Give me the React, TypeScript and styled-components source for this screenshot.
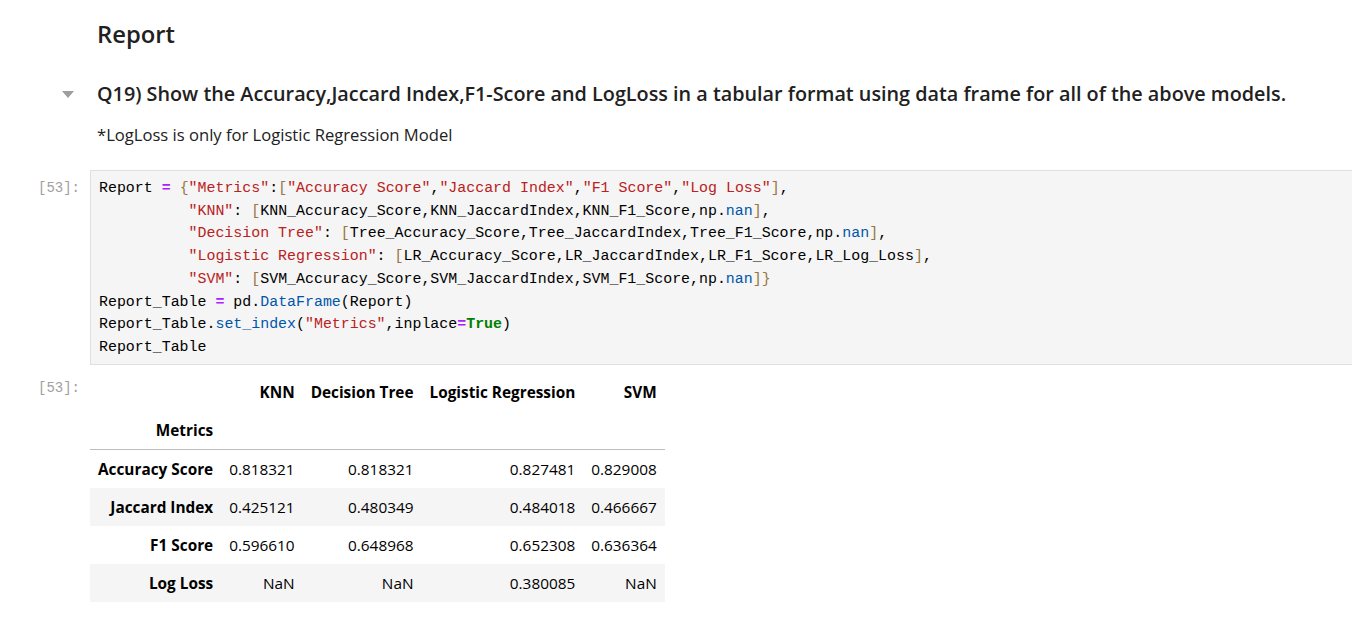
import styled, { createGlobalStyle } from "styled-components";

const GlobalStyle = createGlobalStyle`
  html, body {
    margin: 0;
    padding: 0;
    background: #ffffff;
    overflow: hidden;
  }
  body {
    font-family: "Open Sans", "Noto Sans", sans-serif;
    color: #212121;
  }
`;

const Notebook = styled.div`
  width: 1352px;
  height: 617px;
  padding-top: 14px;
  box-sizing: border-box;
`;

const Cell = styled.div<{ $top?: number }>`
  display: flex;
  align-items: flex-start;
  margin-top: ${(p) => p.$top ?? 0}px;
`;

const Gutter = styled.div<{ $pad?: number }>`
  width: 90px;
  flex-shrink: 0;
  display: flex;
  justify-content: flex-end;
  box-sizing: border-box;
  padding-right: 10px;
  padding-top: ${(p) => p.$pad ?? 0}px;
`;

const Collapser = styled.div`
  width: 90px;
  flex-shrink: 0;
  display: flex;
  justify-content: flex-start;
  padding-left: 62px;
  box-sizing: border-box;
  padding-top: 12px;
`;

const Prompt = styled.div`
  font-family: "Liberation Mono", "DejaVu Sans Mono", monospace;
  font-size: 14px;
  color: #a0a0a0;
  line-height: 22.7px;
`;

const Body = styled.div`
  flex: 1;
  min-width: 0;
`;

const H2 = styled.div`
  padding-left: 7px;
  font-size: 23.8px;
  font-weight: 600;
  line-height: 40px;
  color: #212121;
`;

const H3 = styled.div`
  padding-left: 7px;
  font-size: 19.8px;
  font-weight: 600;
  line-height: 30px;
  color: #212121;
`;

const Para = styled.div`
  padding-left: 7px;
  font-size: 16.6px;
  line-height: 24px;
  color: #212121;
  margin-top: 14px;
`;

const CodeBox = styled.div`
  background: #f5f5f5;
  border: 1px solid #e0e0e0;
  border-right: none;
  padding: 6px 8px 5px;
  font-family: "Liberation Mono", "DejaVu Sans Mono", monospace;
  font-size: 14.93px;
  line-height: 22.7px;
  white-space: pre;
  color: #000000;
`;

const Tok = styled.span<{ $k: "op" | "str" | "br" | "attr" | "kw" }>`
  color: ${(p) =>
    ({ op: "#aa22ff", str: "#ba2121", br: "#997744", attr: "#0055aa", kw: "#008000" })[p.$k]};
  font-weight: ${(p) => (p.$k === "op" || p.$k === "kw" ? 700 : 400)};
`;

const Table = styled.table`
  border-collapse: collapse;
  border-spacing: 0;
  font-size: 15.35px;
  color: #000000;
`;

const Th = styled.th`
  font-weight: 700;
  text-align: right;
  padding: 0 8px;
  height: 38px;
  white-space: nowrap;
`;

const Td = styled.td`
  text-align: right;
  padding: 0 8px;
  height: 38px;
  white-space: nowrap;
`;

const HeadRow = styled.tr<{ $line?: boolean }>`
  border-bottom: ${(p) => (p.$line ? "1px solid #bdbdbd" : "none")};
`;

const Row = styled.tr<{ $shade: boolean }>`
  background: ${(p) => (p.$shade ? "#f5f5f5" : "#ffffff")};
`;

const Triangle = () => (
  <svg width="12" height="8" viewBox="0 0 12 8">
    <path d="M0 0 L12 0 L6 7 Z" fill="#9e9e9e" />
  </svg>
);

const rows = [
  ["Accuracy Score", "0.818321", "0.818321", "0.827481", "0.829008"],
  ["Jaccard Index", "0.425121", "0.480349", "0.484018", "0.466667"],
  ["F1 Score", "0.596610", "0.648968", "0.652308", "0.636364"],
  ["Log Loss", "NaN", "NaN", "0.380085", "NaN"],
];

const S = (t: string) => <Tok $k="str">{t}</Tok>;
const B = (t: string) => <Tok $k="br">{t}</Tok>;
const A = (t: string) => <Tok $k="attr">{t}</Tok>;

export default function App() {
  return (
    <>
      <GlobalStyle />
      <Notebook>
        <Cell>
          <Gutter />
          <Body>
            <H2>Report</H2>
          </Body>
        </Cell>
        <Cell $top={25}>
          <Collapser>
            <Triangle />
          </Collapser>
          <Body>
            <H3>Q19) Show the Accuracy,Jaccard Index,F1-Score and LogLoss in a tabular format using data frame for all of the above models.</H3>
            <Para>*LogLoss is only for Logistic Regression Model</Para>
          </Body>
        </Cell>
        <Cell $top={23}>
          <Gutter $pad={7}>
            <Prompt>[53]:</Prompt>
          </Gutter>
          <Body>
            <CodeBox>
              Report <Tok $k="op">=</Tok> {B("{")}{S('"Metrics"')}:{B("[")}{S('"Accuracy Score"')},{S('"Jaccard Index"')},{S('"F1 Score"')},{S('"Log Loss"')}{B("]")},{"\n"}
              {"          "}{S('"KNN"')}: {B("[")}KNN_Accuracy_Score,KNN_JaccardIndex,KNN_F1_Score,np.{A("nan")}{B("]")},{"\n"}
              {"          "}{S('"Decision Tree"')}: {B("[")}Tree_Accuracy_Score,Tree_JaccardIndex,Tree_F1_Score,np.{A("nan")}{B("]")},{"\n"}
              {"          "}{S('"Logistic Regression"')}: {B("[")}LR_Accuracy_Score,LR_JaccardIndex,LR_F1_Score,LR_Log_Loss{B("]")},{"\n"}
              {"          "}{S('"SVM"')}: {B("[")}SVM_Accuracy_Score,SVM_JaccardIndex,SVM_F1_Score,np.{A("nan")}{B("]}")}{"\n"}
              Report_Table <Tok $k="op">=</Tok> pd.{A("DataFrame")}(Report){"\n"}
              Report_Table.{A("set_index")}({S('"Metrics"')},inplace<Tok $k="op">=</Tok><Tok $k="kw">True</Tok>){"\n"}
              Report_Table
            </CodeBox>
          </Body>
        </Cell>
        <Cell $top={8}>
          <Gutter $pad={4}>
            <Prompt>[53]:</Prompt>
          </Gutter>
          <Body>
            <Table>
              <thead>
                <HeadRow>
                  <Th></Th>
                  <Th>KNN</Th>
                  <Th>Decision Tree</Th>
                  <Th>Logistic Regression</Th>
                  <Th>SVM</Th>
                </HeadRow>
                <HeadRow $line>
                  <Th>Metrics</Th>
                  <Th></Th>
                  <Th></Th>
                  <Th></Th>
                  <Th></Th>
                </HeadRow>
              </thead>
              <tbody>
                {rows.map((r, i) => (
                  <Row key={r[0]} $shade={i % 2 === 1}>
                    <Th>{r[0]}</Th>
                    {r.slice(1).map((v, j) => (
                      <Td key={j}>{v}</Td>
                    ))}
                  </Row>
                ))}
              </tbody>
            </Table>
          </Body>
        </Cell>
      </Notebook>
    </>
  );
}
